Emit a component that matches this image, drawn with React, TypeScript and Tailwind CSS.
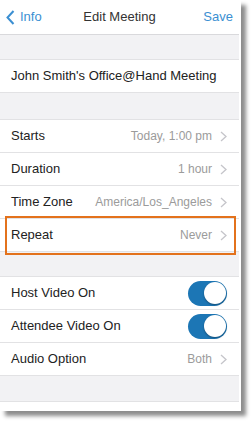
import React from 'react';

const font = { fontFamily: '"Liberation Sans", Arial, sans-serif' };

const Chevron = () => (
  <svg width="7" height="11" viewBox="0 0 7 11" className="ml-[8px] shrink-0">
    <polyline points="1,1 6,5.5 1,10" fill="none" stroke="#c5c5ca" strokeWidth="1.3" />
  </svg>
);

const Toggle = () => (
  <div className="relative h-[25px] w-[39px] rounded-full bg-[#1c76b5] shrink-0">
    {/* knob */}
    <div className="absolute right-[1.5px] top-[1.5px] h-[22px] w-[22px] rounded-full bg-white shadow-[0_1px_2px_rgba(0,0,0,0.35)]" />
  </div>
);

const ValueRow = ({ label, value }: { label: string; value: string }) => (
  <div className="flex h-[33px] items-center border-b border-[#e2e2e4] bg-white pl-[11px] pr-[12px]">
    <span className="text-[13px] text-[#222]">{label}</span>
    <div className="flex-1" />
    <span className="text-[12px] text-[#9b9b9b]">{value}</span>
    <Chevron />
  </div>
);

const ToggleRow = ({ label }: { label: string }) => (
  <div className="flex h-[33px] items-center border-b border-[#e2e2e4] bg-white pl-[11px] pr-[12px]">
    <span className="text-[13px] text-[#222]">{label}</span>
    <div className="flex-1" />
    <Toggle />
  </div>
);

const Gap = ({ h }: { h: string }) => (
  <div className={`${h} border-b border-[#e2e2e4] bg-[#f2f2f4]`} />
);

export default function App() {
  return (
    <div className="h-[423px] w-[251px] bg-white" style={font}>
      <div className="w-[241px] bg-white shadow-[5px_5px_4px_rgba(0,0,0,0.45)]">
        <div className="mr-[2px]">
          {/* NAV BAR */}
          <div className="flex h-[35px] items-center border-b border-[#d9d9dc] bg-white pl-[6px] pr-[6px]">
            <div className="flex w-[60px] items-center text-[13px] text-[#3b8fd2]">
              <svg width="9" height="15" viewBox="0 0 9 15" className="mr-[5px]">
                <polyline points="7.5,1 1.5,7.5 7.5,14" fill="none" stroke="#3b8fd2" strokeWidth="2" />
              </svg>
              Info
            </div>
            <div className="flex-1 text-center text-[13px] font-medium text-[#333]">Edit Meeting</div>
            <div className="w-[60px] text-right text-[13px] text-[#3b8fd2]">Save</div>
          </div>

          <Gap h="h-[25px]" />

          {/* TITLE */}
          <div className="flex h-[33px] items-center border-b border-[#e2e2e4] bg-white pl-[11px]">
            <span className="text-[13px] text-[#222]">John Smith's Office@Hand Meeting</span>
          </div>

          <Gap h="h-[27px]" />

          <ValueRow label="Starts" value="Today, 1:00 pm" />
          <ValueRow label="Duration" value="1 hour" />
          <ValueRow label="Time Zone" value="America/Los_Angeles" />

          {/* REPEAT (highlighted) */}
          <div className="relative">
            <ValueRow label="Repeat" value="Never" />
            <div className="pointer-events-none absolute -top-[3px] -bottom-[3px] left-[5px] right-[3px] border-[2px] border-[#e3721c]" />
          </div>

          <Gap h="h-[25px]" />

          <ToggleRow label="Host Video On" />
          <ToggleRow label="Attendee Video On" />
          <ValueRow label="Audio Option" value="Both" />

          <Gap h="h-[26px]" />
          <div className="h-[9px] bg-white" />
        </div>
      </div>
    </div>
  );
}
